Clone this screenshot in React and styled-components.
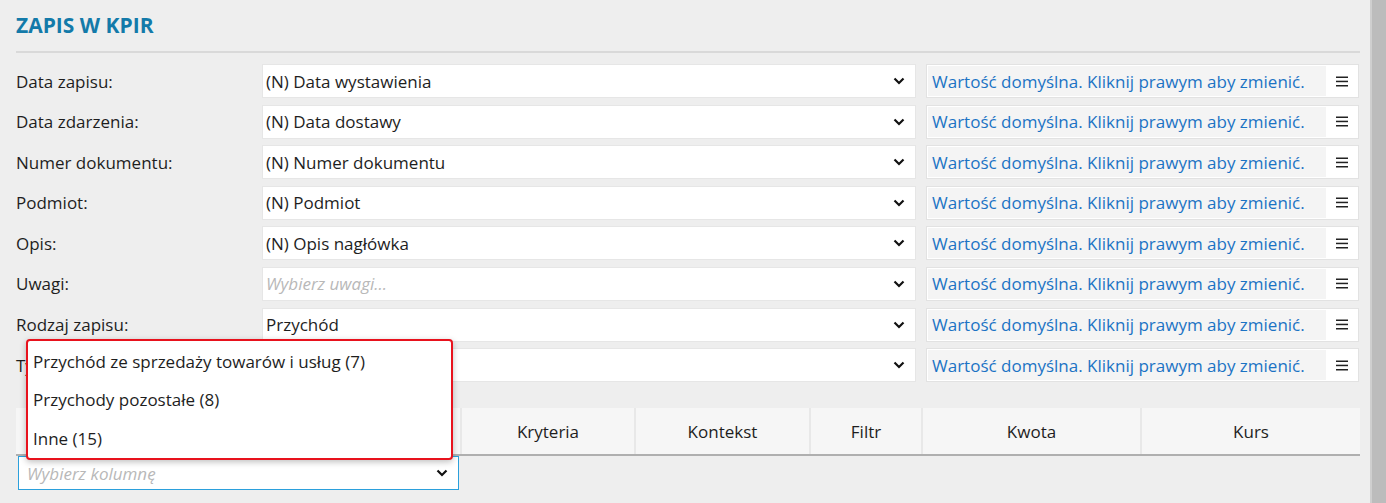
import React from 'react';
import styled, { createGlobalStyle } from 'styled-components';

const GlobalStyle = createGlobalStyle`
  html, body {
    margin: 0;
    padding: 0;
    background: #eeeeee;
    font-family: "Open Sans", "Noto Sans", Arial, sans-serif;
    overflow: hidden;
  }
`;

const Page = styled.div`
  display: flex;
  height: 503px;
  width: 1386px;
`;

const Content = styled.div`
  flex: 1;
  padding: 0 10px 0 16px;
  position: relative;
`;

const Scrollbar = styled.div`
  width: 15px;
  background: #bcbcbc;
  border-left: 2px solid #cfcfcf;
`;

const Title = styled.h1`
  margin: 0;
  height: 51px;
  box-sizing: border-box;
  padding-top: 10px;
  line-height: 30px;
  font-size: 21px;
  font-weight: 700;
  color: #137aa9;
`;

const Divider = styled.div`
  height: 2px;
  background: #d9d9d9;
  margin-bottom: 11px;
`;

const Form = styled.div`
  display: flex;
  flex-direction: column;
  gap: 6.6px;
`;

const Row = styled.div`
  display: grid;
  grid-template-columns: 236px 654px 433px;
  column-gap: 10px;
  height: 34px;
  align-items: center;
`;

const Label = styled.div`
  font-size: 17px;
  color: #1e1e1e;
`;

const Select = styled.div`
  height: 34px;
  box-sizing: border-box;
  background: #fff;
  border: 1px solid ${p => (p.$focus ? '#2ba0dc' : '#e6e6e6')};
  display: flex;
  align-items: center;
  padding: 0 10px 0 3px;
  font-size: 17px;
  color: ${p => (p.$placeholder ? '#b8b8b8' : '#1e1e1e')};
  font-style: ${p => (p.$placeholder ? 'italic' : 'normal')};
`;

const SelectText = styled.span`
  flex: 1;
  white-space: nowrap;
  overflow: hidden;
`;

const Source = styled.div`
  height: 34px;
  box-sizing: border-box;
  border: 1px solid #e2e2e2;
  background: #fff;
  display: flex;
  align-items: stretch;
`;

const SourceText = styled.div`
  flex: 1;
  background: #f4f4f4;
  margin: 1px 0 1px 1px;
  display: flex;
  align-items: center;
  padding-left: 4px;
  font-size: 17px;
  color: #1b73c4;
  white-space: nowrap;
`;

const MenuButton = styled.div`
  width: 32px;
  display: flex;
  align-items: center;
  justify-content: center;
`;

const TableHeader = styled.div`
  margin-top: 26px;
  display: grid;
  grid-template-columns: 444px 174px 175px 112px 219px 220px;
  height: 48px;
  width: 1344px;
  background: #f6f6f6;
  border-bottom: 2px solid #afafaf;
  box-sizing: border-box;
`;

const HeaderCell = styled.div`
  display: flex;
  align-items: center;
  justify-content: center;
  font-size: 17px;
  color: #1e1e1e;
  border-left: ${p => (p.$first ? 'none' : '2px solid #e8e8e8')};
`;

const ColumnPicker = styled(Select)`
  width: 441px;
  margin-left: 2px;
  padding-left: 8px;
`;

const Popup = styled.div`
  position: absolute;
  left: 26px;
  top: 339px;
  width: 427px;
  height: 121px;
  box-sizing: border-box;
  background: #fff;
  border: 2px solid #e8121d;
  border-radius: 4px;
  box-shadow: 0 2px 6px rgba(0, 0, 0, 0.25);
  display: flex;
  flex-direction: column;
  padding-top: 1px;
`;

const PopupItem = styled.div`
  height: 38.5px;
  display: flex;
  align-items: center;
  padding-left: 5px;
  font-size: 17px;
  color: #1e1e1e;
  white-space: nowrap;
`;

const Chevron = () => (
  <svg width="12" height="8" viewBox="0 0 12 8">
    <polyline points="1.5,1.5 6,6 10.5,1.5" fill="none" stroke="#111" strokeWidth="2.2" />
  </svg>
);

const Hamburger = () => (
  <svg width="12" height="11" viewBox="0 0 12 11">
    <rect x="0" y="0.5" width="12" height="1.5" fill="#222" />
    <rect x="0" y="4.7" width="12" height="1.5" fill="#222" />
    <rect x="0" y="9" width="12" height="1.5" fill="#222" />
  </svg>
);

const rows = [
  { label: 'Data zapisu:', value: '(N) Data wystawienia' },
  { label: 'Data zdarzenia:', value: '(N) Data dostawy' },
  { label: 'Numer dokumentu:', value: '(N) Numer dokumentu' },
  { label: 'Podmiot:', value: '(N) Podmiot' },
  { label: 'Opis:', value: '(N) Opis nagłówka' },
  { label: 'Uwagi:', value: 'Wybierz uwagi...', placeholder: true },
  { label: 'Rodzaj zapisu:', value: 'Przychód' },
  { label: 'Typ:', value: '' },
];

const columns = ['Kolumna', 'Kryteria', 'Kontekst', 'Filtr', 'Kwota', 'Kurs'];

const options = [
  'Przychód ze sprzedaży towarów i usług (7)',
  'Przychody pozostałe (8)',
  'Inne (15)',
];

const App = () => (
  <>
    <GlobalStyle />
    <Page>
      <Content>
        <Title>ZAPIS W KPIR</Title>
        <Divider />
        <Form>
          {rows.map((row, i) => (
            <Row key={i}>
              <Label>{row.label}</Label>
              <Select $placeholder={row.placeholder}>
                <SelectText>{row.value}</SelectText>
                <Chevron />
              </Select>
              <Source>
                <SourceText>Wartość domyślna. Kliknij prawym aby zmienić.</SourceText>
                <MenuButton>
                  <Hamburger />
                </MenuButton>
              </Source>
            </Row>
          ))}
        </Form>
        <TableHeader>
          {columns.map((col, i) => (
            <HeaderCell key={col} $first={i === 0}>{col}</HeaderCell>
          ))}
        </TableHeader>
        <ColumnPicker $focus $placeholder>
          <SelectText>Wybierz kolumnę</SelectText>
          <Chevron />
        </ColumnPicker>
        <Popup>
          {options.map(opt => (
            <PopupItem key={opt}>{opt}</PopupItem>
          ))}
        </Popup>
      </Content>
      <Scrollbar />
    </Page>
  </>
);

export default App;
